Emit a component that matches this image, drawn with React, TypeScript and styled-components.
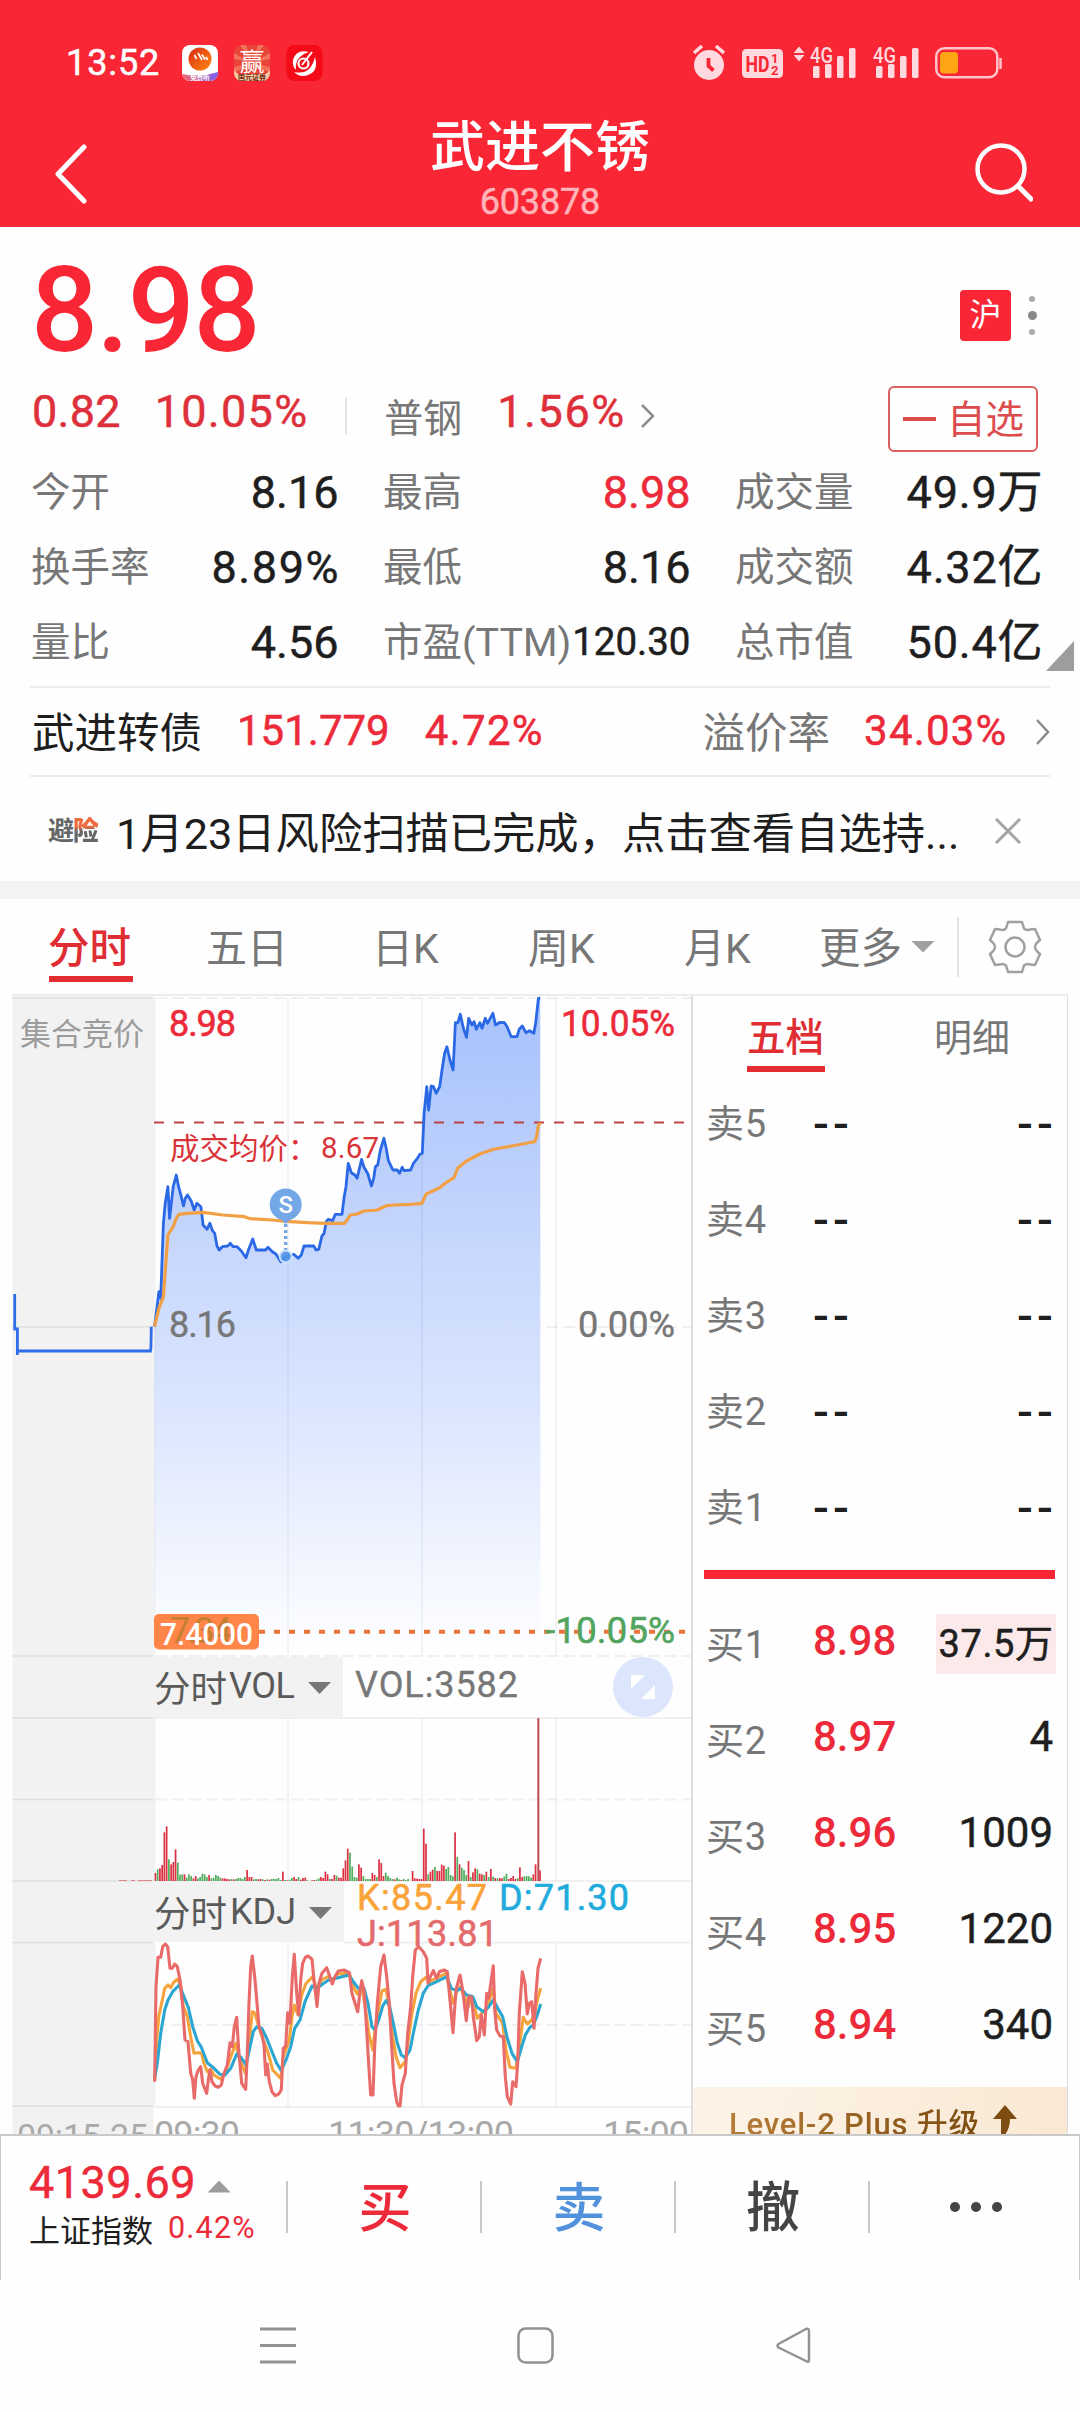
import React from "react";
import styled, { createGlobalStyle } from "styled-components";

const FONT = 'Roboto, "Noto Sans CJK SC", sans-serif';
const RED = "#ec2a3a";
const BRAND = "#f92735";
const INK = "#1e1e1e";
const MUTED = "#777777";

const GlobalStyle = createGlobalStyle`
  * { box-sizing: border-box; }
  html, body { margin: 0; padding: 0; background: #fff; }
  body { font-family: ${FONT}; width: 1080px; }
  svg { display: block; flex: none; }
  svg text { font-family: ${FONT}; }
`;

const Screen = styled.div`
  display: flex;
  flex-direction: column;
  width: 1080px;
  height: 2412px;
  overflow: hidden;
  background: #fefefe;
`;

const Txt = styled.span<{
  $size: number;
  $color?: string;
  $weight?: number;
  $firm?: boolean;
  $ls?: number;
  $drop?: number;
  $ml?: number;
}>`
  flex: none;
  white-space: nowrap;
  line-height: 1;
  font-size: ${(p) => p.$size}px;
  color: ${(p) => p.$color ?? INK};
  font-weight: ${(p) => p.$weight ?? 400};
  -webkit-text-stroke: ${(p) => (p.$firm ? "0.5px currentColor" : "0")};
  letter-spacing: ${(p) => p.$ls ?? 0}px;
  margin-right: ${(p) => -(p.$ls ?? 0)}px;
  margin-top: ${(p) => (p.$drop ?? 0) * 2}px;
  margin-left: ${(p) => p.$ml ?? 0}px;
`;

/* ---------- header ---------- */

const Header = styled.header`
  height: 227px;
  background: ${BRAND};
  flex: none;
`;

const StatusBar = styled.div`
  height: 102px;
  padding: 24px 77px 0 66px;
  display: flex;
  align-items: center;
  justify-content: space-between;
`;

const StatusGroup = styled.div<{ $gap?: number }>`
  display: flex;
  align-items: center;
  gap: ${(p) => p.$gap ?? 0}px;
`;

const TitleBar = styled.div`
  height: 125px;
  padding: 0 47px 0 54px;
  display: grid;
  grid-template-columns: 64px 1fr 71px;
`;

const TitleBlock = styled.div`
  display: flex;
  flex-direction: column;
  align-items: center;
  padding: 18px 0 0 0;
  gap: 9px;
`;

const IconSlot = styled.div<{ $top: number; $end?: boolean }>`
  padding-top: ${(p) => p.$top}px;
  display: flex;
  justify-content: ${(p) => (p.$end ? "flex-end" : "flex-start")};
`;

const Signal = ({ arrows }: { arrows?: boolean }) => (
  <svg width={arrows ? 62 : 46} height="34" viewBox={arrows ? "-16 0 62 34" : "0 0 46 34"}>
    {arrows && <path d="M-11 0.5 l5.5 6.5 h-11z M-11 15.5 l5.5 -6.5 h-11z" fill="#ffd9dd" />}
    <text x="0" y="17" fontSize="22" fontWeight="500" fill="#ffd9dd" textLength="23" lengthAdjust="spacingAndGlyphs">4G</text>
    <g fill="#ffd9dd">
      <rect x="3" y="20" width="6.5" height="12" rx="1.5" />
      <rect x="15" y="18" width="6.5" height="14" rx="1.5" />
      <rect x="27" y="10" width="6.5" height="22" rx="1.5" />
      <rect x="39" y="2" width="6.5" height="30" rx="1.5" />
    </g>
  </svg>
);

/* ---------- quote summary ---------- */

const Quote = styled.section`
  height: 459px;
  flex: none;
  display: flex;
  flex-direction: column;
`;

const PriceRow = styled.div`
  height: 149px;
  padding: 0 43px 0 31px;
  display: flex;
  align-items: center;
  justify-content: space-between;
`;

const BadgeGroup = styled.div`
  display: flex;
  align-items: center;
  gap: 16px;
  padding-top: 28px;
`;

const Market = styled.div`
  width: 51px;
  height: 51px;
  border-radius: 4px;
  background: ${BRAND};
  color: #fff;
  font-size: 32px;
  line-height: 50px;
  text-align: center;
`;

const ChangeRow = styled.div`
  height: 80px;
  padding: 0 42px 0 32px;
  display: flex;
  align-items: center;
`;

const Divider = styled.i<{ $h: number; $color?: string }>`
  flex: none;
  width: 2px;
  height: ${(p) => p.$h}px;
  background: ${(p) => p.$color ?? "#e2e2e2"};
`;

const Favorite = styled.button`
  margin: 6px 0 0 auto;
  width: 150px;
  height: 66px;
  padding: 0 0 0 13px;
  display: flex;
  align-items: center;
  gap: 11px;
  border: 2px solid #d9605f;
  border-radius: 6px;
  background: transparent;
  font-family: inherit;
`;

const Minus = styled.i`
  width: 33px;
  height: 4px;
  background: #dc4c4d;
`;

const StatsWrap = styled.div`
  display: flex;
  align-items: flex-end;
  height: 230px;
  padding-left: 31px;
`;

const Stats = styled.div`
  display: grid;
  grid-template-columns: repeat(3, 307.5px);
  grid-template-rows: repeat(3, 75px);
  column-gap: 44.5px;
  width: 1013px;
  height: 230px;
  flex: none;
`;

const Stat = styled.div`
  display: flex;
  align-items: center;
  justify-content: space-between;
`;

const Corner = styled.i`
  flex: none;
  width: 28px;
  height: 30px;
  margin-bottom: 15px;
  margin-left: 2px;
  background: #9d9d9d;
  clip-path: polygon(100% 0, 100% 100%, 0 100%);
`;

const LinkedRow = styled.div`
  flex: none;
  margin: 0 30px;
  height: 91px;
  border-top: 2px solid #ececec;
  border-bottom: 2px solid #ececec;
  display: flex;
  align-items: center;
  padding-left: 2px;
`;

const News = styled.div`
  flex: none;
  height: 104px;
  padding: 10px 59px 0 48px;
  display: flex;
  align-items: center;
`;

const RiskLogo = styled.span`
  flex: none;
  width: 50px;
  font-size: 26px;
  line-height: 30px;
  font-weight: 700;
  letter-spacing: -1px;
  margin-top: -6px;
  white-space: nowrap;
  color: #666;
  b {
    display: inline-block;
    background: linear-gradient(180deg, #ef6a3c 35%, #666 50%);
    -webkit-background-clip: text;
    color: transparent;
  }
`;

const Band = styled.div`
  flex: none;
  height: 18px;
  background: #f3f3f3;
`;

/* ---------- period tabs ---------- */

const PeriodTabs = styled.nav`
  flex: none;
  height: 97px;
  margin: 0 12px;
  border-bottom: 2px solid #ececec;
  display: flex;
  align-items: center;
  padding-left: 37px;
`;

const Tab = styled.div<{ $w: number; $active?: boolean; $line?: number; $gap?: number }>`
  flex: none;
  width: ${(p) => p.$w}px;
  display: flex;
  flex-direction: column;
  align-items: flex-start;
  gap: ${(p) => p.$gap ?? 6}px;
  padding-top: 17px;
  &::after {
    content: "";
    width: ${(p) => p.$line ?? 84}px;
    height: 6px;
    background: ${(p) => (p.$active ? "#e52d31" : "transparent")};
  }
`;

const Caret = styled.i<{ $w: number; $h: number; $color: string; $up?: boolean }>`
  flex: none;
  width: ${(p) => p.$w}px;
  height: ${(p) => p.$h}px;
  background: ${(p) => p.$color};
  clip-path: ${(p) => (p.$up ? "polygon(50% 0, 100% 100%, 0 100%)" : "polygon(0 0, 100% 0, 50% 100%)")};
`;

/* ---------- chart and order book ---------- */

const Board = styled.main`
  flex: none;
  height: 1138px;
  margin: 0 12px;
  display: grid;
  grid-template-columns: 679px 378px;
  overflow: hidden;
`;

const Book = styled.aside`
  height: 1138px;
  border-left: 2px solid #dedede;
  border-right: 2px solid #dedede;
  display: flex;
  flex-direction: column;
`;

const BookTabs = styled.div`
  flex: none;
  height: 80px;
  padding: 6px 0 0 54px;
  display: flex;
  align-items: flex-start;
`;

const Level = styled.div`
  flex: none;
  height: 96px;
  padding: 0 11px 0 13px;
  display: grid;
  grid-template-columns: 107px 110px 1fr;
  align-items: center;
`;

const Qty = styled.div<{ $hot?: boolean }>`
  justify-self: end;
  height: 60px;
  padding: 0 3px;
  display: flex;
  align-items: center;
  background: ${(p) => (p.$hot ? "#fceaea" : "transparent")};
`;

const Spread = styled.div`
  flex: none;
  margin: 14px 12px 17px 11px;
  height: 9px;
  background: ${BRAND};
`;

const Upgrade = styled.div`
  flex: none;
  height: 70px;
  margin-top: 11px;
  display: flex;
  align-items: flex-start;
  gap: 13px;
  padding: 20px 0 0 36px;
  background: linear-gradient(100deg, #fdf4e8, #f9e8d3);
  white-space: nowrap;
  line-height: 36px;
  font-weight: 500;
  font-size: 31px;
  letter-spacing: 0.8px;
  span {
    background: linear-gradient(90deg, #b67d38, #7c4c10);
    -webkit-background-clip: text;
    color: transparent;
  }
  svg {
    margin-top: -2px;
  }
`;

/* ---------- footer ---------- */

const TradeBar = styled.footer`
  flex: none;
  height: 146px;
  border: 1px solid #c9c9c9;
  border-top-width: 2px;
  border-bottom: 0;
  display: grid;
  grid-template-columns: 285px 194px 194px 194px 1fr;
`;

const IndexBox = styled.div`
  padding: 24px 0 0 28px;
  display: flex;
  flex-direction: column;
  gap: 9px;
`;

const IndexLine = styled.div`
  display: flex;
  align-items: center;
`;

const Action = styled.div`
  display: flex;
  align-items: center;
  height: 142px;
`;

const ActionLabel = styled.div`
  flex: 1;
  display: flex;
  justify-content: center;
  gap: 11px;
  padding-left: 2px;
`;

const Dot = styled.i<{ $s: number; $color: string }>`
  width: ${(p) => p.$s}px;
  height: ${(p) => p.$s}px;
  border-radius: 50%;
  background: ${(p) => p.$color};
`;

const DotColumn = styled.div`
  width: 10px;
  display: flex;
  flex-direction: column;
  align-items: center;
  gap: 9px;
`;

const SystemNav = styled.div`
  flex: none;
  height: 132px;
  padding: 47px 0 0 259px;
  display: grid;
  grid-template-columns: 258px 259px 40px;
  align-items: start;
`;

/* ---------- chart data ---------- */

const PRICE = "346,1010 352,950 356,905 360,925 366,700 370,640 376,590 380,685 388,590 395,555 400,590 406,620 411,648 415,625 420,615 428,632 435,660 441,640 450,650 455,705 464,718 470,700 476,722 481,730 486,768 491,780 498,770 510,768 516,760 522,770 531,770 540,782 551,803 557,778 561,765 566,747 574,780 595,780 600,772 610,785 618,792 629,815 640,800 658,793 668,805 675,795 681,768 703,768 708,780 714,778 721,738 726,730 731,695 735,688 745,692 751,673 766,673 771,620 775,590 780,520 787,548 795,555 800,565 810,508 815,530 824,552 832,588 837,565 841,530 846,525 852,480 860,445 865,475 870,512 880,540 890,540 895,550 901,532 905,542 920,540 926,520 935,505 941,492 946,490 950,370 956,290 960,360 966,288 971,290 977,310 985,290 990,240 996,190 1001,170 1008,210 1015,240 1020,98 1026,98 1031,73 1038,115 1045,142 1050,85 1057,105 1062,95 1067,118 1075,98 1080,115 1087,85 1092,100 1098,85 1104,70 1110,105 1120,97 1130,98 1136,110 1145,140 1158,140 1163,118 1170,108 1178,128 1186,122 1196,130 1200,98 1206,25 1210,24";
const AVERAGE = "346,1010 356,955 366,920 376,735 388,710 395,685 401,673 420,670 455,667 500,675 548,680 560,686 610,690 640,694 690,698 730,700 772,700 785,675 800,672 815,663 845,660 865,647 885,645 920,643 945,640 955,612 985,593 1000,577 1017,563 1025,535 1045,513 1075,492 1105,478 1150,467 1185,458 1198,455 1202,440 1206,405 1211,400";
const AUCTION = "33,912 33,1017 39,1017 39,1095 39,1083 337,1083 338,1075 339,1010";

const J_LINE = "44,485 48,200 54,112 62,112 68,80 76,72 83,80 90,145 97,145 104,132 112,140 120,180 128,260 135,360 144,365 152,460 158,480 163,535 168,470 174,452 182,440 188,490 200,520 205,480 210,450 216,485 225,498 235,502 244,495 252,460 262,435 270,368 277,380 283,320 290,292 296,390 305,490 317,508 322,400 327,250 332,140 337,108 344,170 352,260 357,320 366,345 372,375 377,465 382,432 388,485 396,515 406,527 416,522 424,510 430,385 437,378 443,278 450,310 457,170 463,103 470,220 476,285 482,180 488,130 496,112 504,108 516,118 522,180 531,260 537,190 546,160 560,143 568,165 577,192 585,170 595,153 612,150 628,158 636,220 645,250 653,275 660,215 665,182 672,210 680,330 684,400 692,525 699,525 704,380 712,250 722,140 732,105 740,170 748,250 755,380 762,490 770,545 775,558 780,558 786,495 796,460 803,340 812,260 818,170 826,90 836,80 850,95 860,115 864,190 872,168 880,152 890,175 898,155 912,150 922,155 930,240 939,338 948,210 960,165 968,210 979,302 986,230 995,232 1000,290 1010,362 1018,350 1024,285 1033,345 1040,220 1046,235 1060,137 1064,270 1070,330 1080,348 1090,350 1096,470 1102,530 1112,552 1118,485 1128,500 1133,430 1138,280 1147,155 1155,190 1162,282 1168,250 1175,245 1182,325 1188,220 1194,145 1202,115";
const K_LINE = "44,480 50,360 56,290 64,255 74,205 84,195 92,203 100,188 112,178 122,195 130,260 142,290 152,350 162,400 175,398 185,400 192,430 202,455 212,448 222,465 242,478 255,460 272,410 288,370 296,410 316,460 326,380 337,275 345,280 356,320 370,360 385,400 398,450 422,475 430,410 448,360 456,290 463,255 474,285 485,225 498,190 518,170 530,208 545,180 564,170 575,182 592,162 628,160 640,200 652,222 665,200 676,260 686,340 698,390 705,330 715,270 726,212 738,208 746,250 758,350 768,410 780,443 796,425 806,350 816,280 828,220 842,185 858,172 868,185 882,178 918,160 928,205 940,250 950,215 960,200 974,232 985,260 995,228 1012,295 1025,280 1040,265 1060,205 1068,280 1088,310 1098,390 1110,442 1128,445 1138,380 1150,292 1162,312 1175,300 1182,290 1192,240 1202,205";
const D_LINE = "44,475 52,430 62,340 74,270 84,240 98,215 118,195 130,225 145,262 158,320 172,362 184,382 202,428 222,445 240,463 255,465 272,445 290,402 305,415 318,435 328,390 340,335 350,320 365,325 380,355 396,395 410,430 424,452 438,420 452,380 464,325 480,300 495,245 516,198 532,205 548,192 566,180 600,172 626,165 640,185 655,205 672,205 684,250 696,320 705,330 716,300 728,258 738,242 748,255 760,310 772,370 784,405 796,413 810,390 820,340 835,270 850,220 864,197 890,185 920,170 934,205 950,212 962,205 980,225 998,230 1010,260 1030,275 1045,262 1060,240 1075,268 1088,290 1102,355 1116,400 1132,425 1142,390 1156,345 1170,322 1180,315 1190,290 1202,252";

/* volume per minute: slot index, height, direction */
const VOLUME =
  "0:24r 1:35g 2:38r 3:48r 4:146r 5:164r 6:65g 7:50r 8:57r 9:95r 10:55g 11:19g 12:20g 13:20r 14:10g 15:20g 16:15g 17:8r 18:15r 19:8g 20:12g 21:22g 22:20g 23:12g 24:18r 25:8g 26:10g 27:18g 28:15g 29:10g 30:8r 31:8r 32:6r 33:5r 34:6g 35:5r 36:6g 37:9g 38:9g 39:6g 40:12g 41:33r 42:12r 43:12r 44:5g 45:6g 46:5r 47:6r 48:5g 49:3r 50:5g 51:4r 52:6g 53:6g 54:6g 55:9g 56:3g 57:28r 58:3g 59:2r 60:4g 61:9g 62:12r 63:6r 64:12g 65:4r 66:9r 67:10r 68:2g 70:2r 71:3r 72:4g 73:8g 74:12r 75:9r 76:28r 77:20r 78:6g 79:6r 80:18r 81:16g 82:10r 83:10r 84:38r 85:62r 86:97r 87:85g 88:43g 89:12g 90:10g 91:50r 92:40r 93:15g 94:6g 95:6g 96:6g 97:24r 98:18r 99:12g 100:65r 101:54r 102:15r 103:25g 104:15g 105:9g 106:6g 107:5r 108:10g 109:5g 110:3r 111:6g 112:3g 113:6g 115:30r 116:8r 117:7r 118:6r 119:6r 120:157r 121:112r 122:20g 123:28r 124:34r 125:42g 126:30r 127:30r 128:49r 129:46r 130:36g 131:42g 132:18g 133:14g 134:146r 135:72g 136:50r 137:40g 138:33g 139:18g 140:60r 141:12g 142:26r 143:38r 144:35g 145:22r 146:20r 147:18g 148:28r 149:12g 150:36r 151:13g 152:9r 153:8g 154:9r 155:8r 156:14g 157:22g 158:6r 159:9r 160:15r 161:6r 162:9g 163:41r 164:12r 165:14g 166:15g 167:14g 168:10g 169:20r 170:50r 172:32r";

const scale = (src: string, kx: number, ky: number, ox: number, oy: number) =>
  src
    .split(" ")
    .map((p) => p.split(",").map(Number))
    .map(([x, y]) => `${(x * kx + ox).toFixed(1)},${(y * ky + oy).toFixed(1)}`)
    .join(" ");

const priceScale = (s: string) => scale(s, 1 / 2.24, 1 / 3, -12, -6);
const kdjScale = (s: string) => scale(s, 1 / 3, 1 / 3, 128, 924);

const Chart = () => (
  <svg width="679" height="1138" viewBox="0 0 679 1138" fill="none">
    <defs>
      <linearGradient id="fill" x1="0" y1="0" x2="0" y2="660" gradientUnits="userSpaceOnUse">
        <stop offset="0" stopColor="#a6c1fb" />
        <stop offset="0.35" stopColor="#c4d5fd" />
        <stop offset="0.65" stopColor="#dde7fe" />
        <stop offset="1" stopColor="#ffffff" />
      </linearGradient>
    </defs>

    {/* call auction column and indicator captions */}
    <rect x="0.5" y="0" width="141" height="1138" fill="#f2f2f2" />
    <rect x="141" y="661" width="190" height="60" fill="#f2f2f2" />
    <rect x="141" y="886" width="191" height="60" fill="#f2f2f2" />

    {/* grid */}
    <path d="M0 2H141M0 331H141M0 660H141M0 722H141M0 803.500H141M0 885H141M0 946.500H141M0 1110H141" stroke="#dfdfdf" strokeWidth="1.500" />
    <g stroke="#f0f0f0" strokeWidth="2">
      <path d="M143 722H679M143 885H679M332 946.500H679M143 1111H679" />
      <path d="M143 2H679M143 331H679M143 660H679M143 803.500H679M143 1029H679" strokeDasharray="12 5" />
    </g>
    <polygon points={`${priceScale(PRICE)} 528.5,659 142.5,659`} fill="url(#fill)" />
    <g stroke="#283c6e" strokeOpacity="0.055" strokeWidth="2">
      {[142.5, 276, 410, 544].map((x) => (
        <path key={x} d={`M${x} 2V660 M${x} 722V885 M${x} 947V1111`} />
      ))}
    </g>

    {/* labels */}
    <text x="8" y="48.500" fontSize="31" fill="#9b9b9b" textLength="124">集合竞价</text>
    <g fontSize="36" stroke={RED} strokeWidth="0.600" fill={RED}>
      <text x="157" y="40" textLength="67">8.98</text>
      <text x="549" y="40" textLength="114" lengthAdjust="spacingAndGlyphs">10.05%</text>
    </g>
    <text x="158" y="163" fontSize="29.500" fill="#da3338">成交均价：</text>
    <text x="309" y="162" fontSize="29.500" fill="#da3338" textLength="58">8.67</text>
    <g fontSize="36" stroke={MUTED} strokeWidth="0.400" fill={MUTED}>
      <text x="157" y="341" textLength="67">8.16</text>
      <text x="566" y="341" textLength="97" lengthAdjust="spacingAndGlyphs">0.00%</text>
    </g>

    <path d="M142 126.500H673" stroke="#bd4348" strokeWidth="2.200" strokeDasharray="10 10" />
    <polyline points={priceScale(AUCTION)} stroke="#2f6ee8" strokeWidth="2.800" />
    <polyline points={priceScale(PRICE)} stroke="#2a68e6" strokeWidth="2.800" strokeLinejoin="round" />
    <polyline points={priceScale(AVERAGE)} stroke="#f2a045" strokeWidth="3.200" strokeLinejoin="round" />

    {/* sell marker */}
    <path d="M273.700 228V256" stroke="#74a7e6" strokeWidth="3.500" strokeDasharray="3 3" />
    <circle cx="273.700" cy="260.500" r="6" fill="#4f93e6" fillOpacity="0.900" stroke="#cfe0fa" strokeWidth="2" />
    <path d="M273.700 228l-6-6h12z" fill="#74a7e6" />
    <circle cx="273.700" cy="208.500" r="16" fill="#74a7e6" />
    <text x="273.700" y="217" fontSize="24" fontWeight="500" fill="#fff" textAnchor="middle">S</text>

    {/* cost line */}
    <path d="M142 635.700H673" stroke="#e8743a" strokeWidth="4" strokeDasharray="6 9" />
    <rect x="142" y="618" width="105" height="35.500" rx="5" fill="#ff8548" />
    <text x="158" y="647" fontSize="36" fill="#c47f32" textLength="62">7.34</text>
    <text x="148" y="649" fontSize="32" fontWeight="500" fill="#fff" textLength="93" lengthAdjust="spacingAndGlyphs">7.4000</text>
    <text x="533" y="647" fontSize="36" fill="#52a45f" stroke="#52a45f" strokeWidth="0.500" textLength="130" lengthAdjust="spacingAndGlyphs">-10.05%</text>

    {/* volume */}
    <text x="142" y="706" fontSize="36.500" fill="#5a5a5a">分时</text>
    <text x="217" y="702" fontSize="36" fill="#5a5a5a" textLength="66">VOL</text>
    <path d="M296 686h23l-11.500 12z" fill="#777" />
    <text x="343" y="701" fontSize="36" fill={MUTED} stroke={MUTED} strokeWidth="0.300" textLength="163">VOL:3582</text>
    <circle cx="631" cy="691" r="30" fill="#dbe5fc" />
    <path d="M619 679h14l-14 14zM643 689v14h-14z" fill="#fff" />
    {VOLUME.split(" ").map((v) => {
      const [slot, rest] = v.split(":");
      const h = parseInt(rest, 10) / 3;
      return (
        <rect
          key={slot}
          x={142.6 + Number(slot) * 2.236}
          y={885 - h}
          width={1.7}
          height={h}
          fill={rest.endsWith("r") ? "#dc2f42" : "#4fae5b"}
        />
      );
    })}
    <path d="M107 884.500h8m4 0h4m3 0h14" stroke="#e0868c" strokeWidth="1" />
    <rect x="525.300" y="722" width="2" height="163" fill="#b94a52" />

    {/* KDJ */}
    <text x="142" y="931" fontSize="36.500" fill="#5a5a5a">分时</text>
    <text x="218" y="928" fontSize="36" fill="#5a5a5a" textLength="66">KDJ</text>
    <path d="M297 911h23l-11.500 12z" fill="#777" />
    <g fontSize="36" strokeWidth="0.600">
      <text x="345" y="914" fill="#f9a33a" stroke="#f9a33a" textLength="130">K:85.47</text>
      <text x="487" y="914" fill="#1fabdc" stroke="#1fabdc" textLength="130">D:71.30</text>
      <text x="345" y="950" fill="#e46b6b" stroke="#e46b6b" textLength="141">J:113.81</text>
    </g>
    <g strokeWidth="3.100" strokeLinejoin="round">
      <polyline points={kdjScale(K_LINE)} stroke="#f5a33b" />
      <polyline points={kdjScale(D_LINE)} stroke="#2ba6d0" />
      <polyline points={kdjScale(J_LINE)} stroke="#e86b69" />
    </g>

    {/* time axis */}
    <g fill="#a9a9a9">
      <text x="5" y="1152" fontSize="34" textLength="131">09:15-25</text>
      <text x="142" y="1151" fontSize="36" textLength="86">09:30</text>
      <text x="316" y="1151" fontSize="36" textLength="186">11:30/13:00</text>
      <text x="591" y="1151" fontSize="36" textLength="86">15:00</text>
    </g>
  </svg>
);

const Chevron = ({ w, h, color = "#8b8b8b" }: { w: number; h: number; color?: string }) => (
  <svg width={w + 4} height={h + 4} viewBox={`-2 -2 ${w + 4} ${h + 4}`}>
    <path d={`M0 0L${w} ${h / 2}L0 ${h}`} fill="none" stroke={color} strokeWidth="2.500" />
  </svg>
);

const STATS = [
  { label: "今开", value: "8.16" },
  { label: "最高", value: "8.98", color: RED },
  { label: "成交量", value: "49.9万", ls: 0.8 },
  { label: "换手率", value: "8.89%", ls: 1.6 },
  { label: "最低", value: "8.16" },
  { label: "成交额", value: "4.32亿", ls: 0.8 },
  { label: "量比", value: "4.56" },
  { label: "市盈(TTM)", value: "120.30", small: true },
  { label: "总市值", value: "50.4亿", ls: 0.8 },
];

const BIDS = [
  ["买1", "8.98", "37.5万"],
  ["买2", "8.97", "4"],
  ["买3", "8.96", "1009"],
  ["买4", "8.95", "1220"],
  ["买5", "8.94", "340"],
];

export default function App() {
  return (
    <>
      <GlobalStyle />
      <Screen>
        <Header>
          <StatusBar>
            <StatusGroup>
              <Txt $size={36} $color="#fff" $firm $ls={0.9}>13:52</Txt>
              <svg width="142" height="36" viewBox="0 0 142 36" style={{ marginLeft: 23 }}>
                <defs>
                  <linearGradient id="orb" x1="0" y1="0" x2="1" y2="1">
                    <stop offset="0" stopColor="#d92a12" />
                    <stop offset="1" stopColor="#ff8a10" />
                  </linearGradient>
                  <linearGradient id="strip" x1="0" y1="0" x2="1" y2="0">
                    <stop offset="0" stopColor="#f4696b" />
                    <stop offset="1" stopColor="#7a62f0" />
                  </linearGradient>
                  <clipPath id="app1"><rect width="36" height="36" rx="8" /></clipPath>
                  <clipPath id="app2"><rect x="52" width="36" height="36" rx="8" /></clipPath>
                </defs>
                <g clipPath="url(#app1)">
                  <rect width="36" height="36" fill="#fff" />
                  <path d="M0 29Q18 33 36 27V36H0z" fill="url(#strip)" />
                  <circle cx="18" cy="14" r="11.500" fill="url(#orb)" />
                  <path d="M12.500 10l2 4M16 8l4 7M20 9.500l3 5M24 12l1.500 3" stroke="#fff" strokeWidth="1.700" fill="none" />
                  <text x="18" y="35" fontSize="6.500" fontWeight="700" fill="#fff" textAnchor="middle">免费听</text>
                </g>
                <g clipPath="url(#app2)">
                  <rect x="52" width="36" height="36" fill="#e94436" />
                  <path d="M70 18L58 0h6zM70 18L76 0h6zM70 18L52 8v6zM70 18L88 8v6zM70 18L52 22v6zM70 18L88 22v6z" fill="#f2705c" />
                  <text x="70" y="26" fontSize="25" fill="#fff" textAnchor="middle">赢</text>
                  <path d="M52 25q3 5 8 4h20q5 1 8-4v11H52z" fill="#f6c9a0" />
                  <text x="70" y="35" fontSize="7" fontWeight="700" fill="#6b2a18" textAnchor="middle">国元证券</text>
                </g>
                <rect x="104.500" width="36" height="36" rx="8" fill="#f50a18" />
                <path d="M127 7Q114 4 111 15Q110 21 114 25Q113 16 118 12Q122 8 127 7z" fill="#fff" />
                <path d="M133 12Q137 26 126 30Q118 33 112 27Q122 29 127 24Q131 20 133 12z" fill="#fff" />
                <circle cx="121.500" cy="18.500" r="5" fill="none" stroke="#fff" strokeWidth="2.200" />
                <path d="M130 7L120 20" stroke="#fff" strokeWidth="2" />
              </svg>
            </StatusGroup>
            <StatusGroup>
              <svg width="32" height="36" viewBox="0 0 32 36">
                <circle cx="16" cy="20" r="15" fill="#ffd9dd" />
                <path d="M1 8l8-7M31 8l-8-7" stroke="#ffd9dd" strokeWidth="3.500" />
                <path d="M15.500 13v8l5 4.500" fill="none" stroke={BRAND} strokeWidth="3.800" />
              </svg>
              <svg width="41" height="29" viewBox="0 0 41 29" style={{ marginLeft: 17 }}>
                <rect width="41" height="29" rx="4.500" fill="#ffd9dd" />
                <g fill={BRAND} fontWeight="700">
                  <text x="3.500" y="22.500" fontSize="22" textLength="24" lengthAdjust="spacingAndGlyphs">HD</text>
                  <text x="29" y="14" fontSize="13">1</text>
                  <text x="29" y="26" fontSize="13">2</text>
                </g>
              </svg>
              <StatusGroup $gap={17} style={{ marginLeft: 11 }}>
                <Signal arrows />
                <Signal />
              </StatusGroup>
              <svg width="68" height="32" viewBox="0 0 68 32" style={{ marginLeft: 16 }}>
                <rect x="1.300" y="1.300" width="61" height="29" rx="8" fill="none" stroke="#ffc3c9" strokeWidth="2.500" />
                <rect x="5" y="5" width="18" height="21.500" rx="4" fill="#ffa514" />
                <path d="M65.500 11v11" stroke="#ffc3c9" strokeWidth="2.500" />
              </svg>
            </StatusGroup>
          </StatusBar>
          <TitleBar>
            <IconSlot $top={42}>
              <svg width="34" height="60" viewBox="0 0 34 60">
                <path d="M30 3L4 30L30 57" fill="none" stroke="#fff" strokeWidth="5" strokeLinecap="round" strokeLinejoin="round" />
              </svg>
            </IconSlot>
            <TitleBlock>
              <Txt $size={55} $color="#fff" $weight={500}>武进不锈</Txt>
              <Txt $size={36} $color="#fdb4b9" $firm $ls={-0.2}>603878</Txt>
            </TitleBlock>
            <IconSlot $top={40} $end>
              <svg width="60" height="62" viewBox="0 0 60 62">
                <circle cx="28" cy="27" r="23.500" fill="none" stroke="#fff" strokeWidth="4.500" />
                <path d="M45 44L58 57" stroke="#fff" strokeWidth="5" strokeLinecap="round" />
              </svg>
            </IconSlot>
          </TitleBar>
        </Header>

        <Quote>
          <PriceRow>
            <Txt $size={118} $color={BRAND} $weight={500} $ls={-1.500} $drop={9}>8.98</Txt>
            <BadgeGroup>
              <Market>沪</Market>
              <DotColumn>
                <Dot $s={6} $color="#aaa" />
                <Dot $s={9} $color="#888" />
                <Dot $s={6} $color="#aaa" />
              </DotColumn>
            </BadgeGroup>
          </PriceRow>
          <ChangeRow>
            <Txt $size={45} $color="#de303b" $firm $ls={0.3} $drop={-5}>0.82</Txt>
            <Txt $size={45} $color="#de303b" $firm $ls={1.300} $drop={-5} $ml={34}>10.05%</Txt>
            <Divider $h={36} style={{ marginLeft: 38 }} />
            <Txt $size={39} $color={MUTED} $ml={37} $drop={3}>普钢</Txt>
            <Txt $size={45} $color="#de303b" $firm $ls={1.600} $drop={-5} $ml={35}>1.56%</Txt>
            <StatusGroup style={{ marginLeft: 16 }}><Chevron w={11} h={22} /></StatusGroup>
            <Favorite>
              <Minus />
              <Txt $size={38.5} $color="#dc4c4d" $drop={1}>自选</Txt>
            </Favorite>
          </ChangeRow>
          <StatsWrap>
            <Stats>
              {STATS.map((s) => (
                <Stat key={s.label}>
                  <Txt $size={39.5} $color={MUTED} $drop={-1}>{s.label}</Txt>
                  <Txt $size={s.small ? 38.5 : 45} $color={s.color} $firm $ls={s.ls ?? 0} $drop={-1}>{s.value}</Txt>
                </Stat>
              ))}
            </Stats>
            <Corner />
          </StatsWrap>
        </Quote>

        <LinkedRow>
          <Txt $size={42.5} $drop={3}>武进转债</Txt>
          <Txt $size={42} $color={RED} $firm $ml={35} $drop={-1}>151.779</Txt>
          <Txt $size={42} $color={RED} $firm $ml={35} $ls={1.300} $drop={-1}>4.72%</Txt>
          <Txt $size={42.5} $color={MUTED} $ml={160} $drop={3}>溢价率</Txt>
          <Txt $size={42} $color={RED} $firm $ml={34} $ls={1.200} $drop={-1}>34.03%</Txt>
          <StatusGroup style={{ marginLeft: "auto" }}><Chevron w={11} h={24} /></StatusGroup>
        </LinkedRow>
        <News>
          <RiskLogo>避<b>险</b></RiskLogo>
          <Txt $size={43.3} $ml={18} $drop={1}>1月23日风险扫描已完成，点击查看自选持...</Txt>
          <svg width="26" height="26" viewBox="0 0 26 26" style={{ marginLeft: "auto", marginTop: -6 }}>
            <path d="M1 1L25 25M25 1L1 25" stroke="#a3a3a3" strokeWidth="3" />
          </svg>
        </News>
        <Band />

        <PeriodTabs>
          <Tab $w={157} $active><Txt $size={41.5} $color="#e02d33" $weight={500} $ml={-1}>分时</Txt></Tab>
          <Tab $w={166}><Txt $size={41} $color={MUTED}>五日</Txt></Tab>
          <Tab $w={156}><Txt $size={41} $color={MUTED}>日K</Txt></Tab>
          <Tab $w={156}><Txt $size={41} $color={MUTED}>周K</Txt></Tab>
          <Tab $w={135}><Txt $size={41} $color={MUTED}>月K</Txt></Tab>
          <Tab $w={92}><Txt $size={41.5} $color={MUTED}>更多</Txt></Tab>
          <Caret $w={24} $h={12} $color="#a0a0a0" />
          <Divider $h={60} style={{ marginLeft: 22 }} />
          <svg width="54" height="54" viewBox="-27 -27 54 54" style={{ marginLeft: 29 }}>
            <path
              d="M-7 -25H7L9 -18.500Q12 -16 15 -17.500L20 -18L25 -7Q20 -3 20 0Q20 3 25 7L20 18L15 17.500Q12 16 9 18.500L7 25H-7L-9 18.500Q-12 16 -15 17.500L-20 18L-25 7Q-20 3 -20 0Q-20 -3 -25 -7L-20 -18L-15 -17.500Q-12 -16 -9 -18.500Z"
              fill="none" stroke="#a0a0a0" strokeWidth="2.500" strokeLinejoin="round"
            />
            <circle r="9.500" fill="none" stroke="#a0a0a0" strokeWidth="2.500" />
          </svg>
        </PeriodTabs>

        <Board>
          <Chart />
          <Book>
            <BookTabs>
              <Tab $w={187} $active $line={78} $gap={8}><Txt $size={38.5} $color="#e02d33" $weight={500}>五档</Txt></Tab>
              <Tab $w={80}><Txt $size={38} $color={MUTED}>明细</Txt></Tab>
            </BookTabs>
            {[5, 4, 3, 2, 1].map((n) => (
              <Level key={n}>
                <Txt $size={38} $color={MUTED} $ls={0.8}>卖{n}</Txt>
                <Txt $size={47} $weight={500} $ls={4} $drop={-0.5}>--</Txt>
                <Qty><Txt $size={47} $weight={500} $ls={4} $drop={-0.5}>--</Txt></Qty>
              </Level>
            ))}
            <Spread />
            {BIDS.map(([label, price, qty], i) => (
              <Level key={label}>
                <Txt $size={38} $color={MUTED} $drop={1} $ls={0.8}>{label}</Txt>
                <Txt $size={42} $color={RED} $weight={500} $drop={-3}>{price}</Txt>
                <Qty $hot={i === 0}>
                  <Txt $size={i === 0 ? 38 : 42} $firm $drop={i === 0 ? 0 : -3} $ls={i === 0 ? 0.6 : 0}>{qty}</Txt>
                </Qty>
              </Level>
            ))}
            <Upgrade>
              <span>Level-2 Plus 升级</span>
              <svg width="24" height="36" viewBox="0 0 24 36">
                <path d="M12 0L24 14H17Q17 26 8 34Q8 26 8 14H0z" fill="#7c4c10" />
              </svg>
            </Upgrade>
          </Book>
        </Board>

        <TradeBar>
          <IndexBox>
            <IndexLine>
              <Txt $size={45} $color={RED} $firm $ls={0.5}>4139.69</Txt>
              <Caret $w={23} $h={12} $color="#9d9d9d" $up style={{ marginLeft: 12, marginTop: 8 }} />
            </IndexLine>
            <IndexLine>
              <Txt $size={31} $drop={1}>上证指数</Txt>
              <Txt $size={30.5} $color={RED} $ml={15} $ls={1.2} $drop={-2}>0.42%</Txt>
            </IndexLine>
          </IndexBox>
          <Action><Divider $h={52} $color="#c9c9c9" /><ActionLabel><Txt $size={53} $color={RED} $weight={500} $drop={2}>买</Txt></ActionLabel></Action>
          <Action><Divider $h={52} $color="#c9c9c9" /><ActionLabel><Txt $size={53} $color="#5291dc" $weight={500} $drop={2}>卖</Txt></ActionLabel></Action>
          <Action><Divider $h={52} $color="#c9c9c9" /><ActionLabel><Txt $size={54} $color="#444" $weight={500} $drop={2}>撤</Txt></ActionLabel></Action>
          <Action>
            <Divider $h={52} $color="#c9c9c9" />
            <ActionLabel><Dot $s={10} $color="#444" /><Dot $s={10} $color="#444" /><Dot $s={10} $color="#444" /></ActionLabel>
          </Action>
        </TradeBar>
        <SystemNav>
          <svg width="38" height="38" viewBox="0 0 38 38"><path d="M1 2H37M1 18.500H37M1 35H37" stroke="#929292" strokeWidth="3" /></svg>
          <svg width="38" height="38" viewBox="0 0 38 38"><rect x="1.500" y="1.500" width="34" height="34" rx="7" fill="none" stroke="#929292" strokeWidth="2.500" /></svg>
          <svg width="38" height="38" viewBox="0 0 38 38"><path d="M33 4V33Q33 36 30 34L2.500 20.500Q0.500 18.500 2.500 17L30 2Q33 1 33 4Z" fill="none" stroke="#929292" strokeWidth="2.500" strokeLinejoin="round" /></svg>
        </SystemNav>
      </Screen>
    </>
  );
}
